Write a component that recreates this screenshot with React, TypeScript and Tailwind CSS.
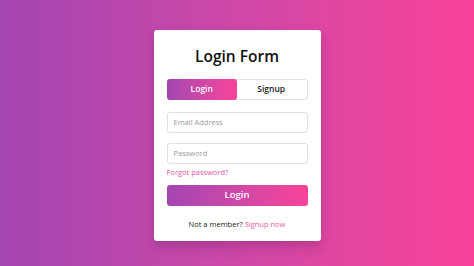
import React from "react";

export default function App() {
  return (
    <div
      className="w-[474px] h-[266px] overflow-hidden bg-gradient-to-r from-[#a445b2] to-[#fa4299] flex justify-center pt-[30px]"
      style={{ fontFamily: '"Open Sans", "Noto Sans", sans-serif' }}
    >
      <div className="w-[167px] h-[211px] bg-white rounded-[3px] shadow-[0_6px_12px_rgba(80,20,80,0.25)] flex flex-col px-[13px] pt-[16px]">
        <h1 className="text-[15.5px] leading-[20px] font-semibold text-[#111] text-center">Login Form</h1>
        <div className="mt-[13px] h-[21px] flex border border-[#e2e2e2] rounded-[3px]">
          <div className="flex-1 -m-px rounded-[3px] bg-gradient-to-r from-[#a445b2] to-[#fa4299] flex items-center justify-center text-white text-[8.5px] font-semibold">
            Login
          </div>
          <div className="flex-1 flex items-center justify-center text-[#1a1a1a] text-[8.5px] font-semibold">
            Signup
          </div>
        </div>
        <div className="mt-[12px] h-[21px] border border-[#e0e0e0] rounded-[3px] flex items-center pl-[6px] text-[7.5px] text-[#9a9a9a]">
          Email Address
        </div>
        <div className="mt-[10px] h-[21px] border border-[#e0e0e0] rounded-[3px] flex items-center pl-[6px] text-[7.5px] text-[#9a9a9a]">
          Password
        </div>
        <div className="mt-[2px] text-[7.5px] leading-[12px] text-[#e0559f]">Forgot password?</div>
        <div className="mt-[7px] h-[21px] rounded-[3px] bg-gradient-to-r from-[#a445b2] to-[#fa4299] flex items-center justify-center text-white text-[9.5px] font-semibold">
          Login
        </div>
        <div className="mt-[12px] text-[7.5px] leading-[12px] text-center text-[#222]">
          Not a member? <span className="text-[#ea5aa4]">Signup now</span>
        </div>
      </div>
    </div>
  );
}
